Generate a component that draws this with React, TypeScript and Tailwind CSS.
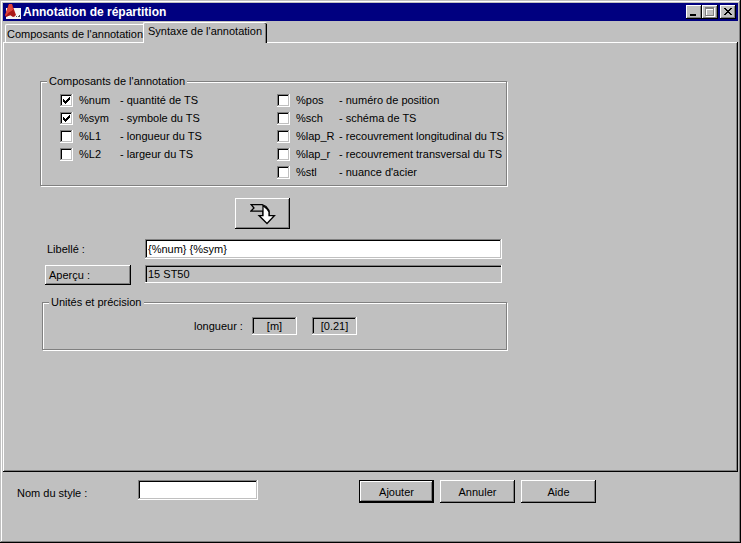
import { useState } from 'react';
import type { ReactNode } from 'react';
import clsx from 'clsx';

const raised =
  'bg-[#c0c0c0] shadow-[inset_-1px_-1px_0_#000,inset_1px_1px_0_#fff,inset_-2px_-2px_0_#808080]';
const sunken =
  'shadow-[inset_-1px_-1px_0_#fff,inset_1px_1px_0_#808080,inset_-2px_-2px_0_#c0c0c0,inset_2px_2px_0_#000]';

const leftTokens = [
  { token: '%num', text: 'quantité de TS', checked: true },
  { token: '%sym', text: 'symbole du TS', checked: true },
  { token: '%L1', text: 'longueur du TS' },
  { token: '%L2', text: 'largeur du TS' },
];

const rightTokens = [
  { token: '%pos', text: 'numéro de position' },
  { token: '%sch', text: 'schéma de TS' },
  { token: '%lap_R', text: 'recouvrement longitudinal du TS' },
  { token: '%lap_r', text: 'recouvrement transversal du TS' },
  { token: '%stl', text: "nuance d'acier" },
];

type Token = { token: string; text: string; checked?: boolean };

function TokenRow({ token, text, checked = false, wide }: Token & { wide?: boolean }) {
  return (
    <label className="flex h-[18px] items-center">
      <span className="mr-1.5 grid size-[13px] shrink-0">
        <input
          type="checkbox"
          defaultChecked={checked}
          className={clsx('peer col-start-1 row-start-1 size-[13px] appearance-none bg-white', sunken)}
        />
        <svg
          viewBox="0 0 13 13"
          shapeRendering="crispEdges"
          className="pointer-events-none invisible col-start-1 row-start-1 size-[13px] peer-checked:visible"
        >
          <path d="M3 5h1v1h1v1h1v-1h1v-1h1v-1h1v-1h1v3h-1v1h-1v1h-1v1h-1v1h-1v-1h-1v-1h-1z" />
        </svg>
      </span>
      <span className={clsx('shrink-0', wide ? 'w-[43px]' : 'w-[41px]')}>{token}</span>
      <span className="whitespace-nowrap">- {text}</span>
    </label>
  );
}

function GroupBox({ title, className, children }: { title: string; className?: string; children: ReactNode }) {
  return (
    <fieldset
      className={clsx(
        'border border-[#808080] shadow-[1px_1px_0_#fff,inset_1px_1px_0_#fff]',
        className,
      )}
    >
      <legend className="ml-1.5 bg-[#c0c0c0] px-0.5">{title}</legend>
      {children}
    </fieldset>
  );
}

function AppIcon() {
  return (
    <svg viewBox="0 0 16 16" className="size-4 shrink-0">
      <rect x="1" y="4" width="15" height="11" fill="#f4f4f4" />
      <path d="M4 0h3l4 11-2 2-3-2-3 1-2 1-1-2z" fill="#b81c1c" />
      <path d="M4 0h3l1 6-3 3-5 3z" fill="#e0443c" />
      <path d="M3 9l5-3 2 5-2 2-3-2-4 2z" fill="#a81818" />
      <path d="M11 12h1v1h-1zM14 11h1v2h-2v-1h1z" fill="#555" />
    </svg>
  );
}

function TitleBar() {
  const button = clsx('flex h-3.5 w-4 items-center justify-center', raised);
  return (
    <header className="flex h-[18px] items-center bg-[#000080] pr-0.5 pl-0.5 text-white">
      <AppIcon />
      <h1 className="ml-0.5 flex-1 text-[12px] font-bold">Annotation de répartition</h1>
      <button type="button" aria-label="Réduire" className={button}>
        <svg viewBox="0 0 16 14" shapeRendering="crispEdges" className="h-3.5 w-4">
          <path d="M4 9h6v2H4z" />
        </svg>
      </button>
      <button type="button" aria-label="Agrandir" disabled className={button}>
        <svg viewBox="0 0 16 14" shapeRendering="crispEdges" className="h-3.5 w-4">
          <path d="M4 3h9v9H4zM5 5v6h7V5z" fill="#fff" fillRule="evenodd" />
          <path d="M3 2h9v9H3zM4 4v6h7V4z" fill="#808080" fillRule="evenodd" />
        </svg>
      </button>
      <button type="button" aria-label="Fermer" className={clsx('ml-0.5', button)}>
        <svg viewBox="0 0 16 14" shapeRendering="crispEdges" className="h-3.5 w-4">
          <path d="M4 3h2v1h1v1h2V4h1V3h2v1h-1v1h-1v1H9v1h1v1h1v1h1v1h-2V9H9V8H7v1H6v1H4V9h1V8h1V7h1V6H6V5H5V4H4z" />
        </svg>
      </button>
    </header>
  );
}

function DialogButton({ children, primary }: { children: ReactNode; primary?: boolean }) {
  return (
    <button
      type="button"
      className={clsx('h-[23px] w-[75px]', primary && 'border border-black', raised)}
    >
      {children}
    </button>
  );
}

export default function App() {
  const [label, setLabel] = useState('{%num} {%sym}');

  return (
    <main className="flex min-h-screen flex-col bg-[#c0c0c0] p-[3px] font-['Liberation_Sans',Arial,sans-serif] text-[11px] leading-[14px] text-black shadow-[inset_-1px_-1px_0_#000,inset_1px_1px_0_#c0c0c0,inset_-2px_-2px_0_#808080,inset_2px_2px_0_#fff]">
      <TitleBar />

      <div role="tablist" className="mt-px flex items-end pl-0.5">
        <button
          type="button"
          role="tab"
          aria-selected="false"
          className="h-[18px] w-[138px] rounded-tl-[2px] border-t border-l border-white pl-px text-left whitespace-nowrap"
        >
          Composants de l'annotation
        </button>
        <button
          type="button"
          role="tab"
          aria-selected="true"
          className="z-10 -mb-px h-[21px] w-[124px] rounded-t-[2px] border-t border-l border-white bg-[#c0c0c0] pb-1 pl-1 text-left whitespace-nowrap shadow-[inset_-1px_0_0_#000,inset_-2px_0_0_#808080]"
        >
          Syntaxe de l'annotation
        </button>
      </div>

      <section
        role="tabpanel"
        className="flex-1 pt-8 pb-5 pl-[37px] shadow-[inset_-1px_-1px_0_#000,inset_1px_1px_0_#fff,inset_-2px_-2px_0_#808080]"
      >
        <div className="max-w-[467px]">
          <GroupBox title="Composants de l'annotation">
            <div className="grid grid-cols-[217px_1fr] pt-[3px] pb-1 pl-[19px]">
              <div>
                {leftTokens.map((item) => (
                  <TokenRow key={item.token} {...item} />
                ))}
              </div>
              <div>
                {rightTokens.map((item) => (
                  <TokenRow key={item.token} {...item} wide />
                ))}
              </div>
            </div>
          </GroupBox>

          <button
            type="button"
            aria-label="Insérer"
            className={clsx('mt-3 ml-[195px] flex h-[31px] w-[55px] items-center justify-center', raised)}
          >
            <svg viewBox="0 0 26 22" className="h-[22px] w-[26px]">
              <path
                d="M1 1.500h11l4 2 3 4v5H13V8H1l3-3z"
                fill="#c0c0c0"
                stroke="#000"
                strokeWidth="1.250"
              />
              <path
                d="M13 2.500 17 6l2 3v3.500h5.500L17 20.500 9 12.500h4z"
                fill="#fff"
                stroke="#000"
                strokeWidth="1.250"
              />
            </svg>
          </button>

          <div className="mt-2.5 grid grid-cols-[100px_1fr] items-start gap-y-1.5 pr-[5px] pl-[5px]">
            <label htmlFor="libelle" className="pt-[3px] pl-0.5">
              Libellé :
            </label>
            <input
              id="libelle"
              type="text"
              value={label}
              onChange={(e) => setLabel(e.target.value)}
              className={clsx('h-5 w-full bg-white px-[3px]', sunken)}
            />
            <button type="button" className={clsx('h-5 w-[86px] pl-1 text-left', raised)}>
              Aperçu :
            </button>
            <output
              className="h-[18px] px-[3px] pt-0.5 shadow-[inset_-1px_-1px_0_#fff,inset_1px_1px_0_#808080,inset_2px_2px_0_#000]"
            >
              15 ST50
            </output>
          </div>

          <GroupBox title="Unités et précision" className="mt-2.5 ml-0.5">
            <div className="flex items-center pt-2 pb-3.5 pl-[151px]">
              <span className="w-[58px]">longueur :</span>
              <button type="button" className={clsx('h-[18px] w-[45px]', sunken)}>
                [m]
              </button>
              <button type="button" className={clsx('ml-[15px] h-[18px] w-[45px]', sunken)}>
                [0.21]
              </button>
            </div>
          </GroupBox>
        </div>
      </section>

      <footer className="flex h-[68px] items-start pt-2 pl-3.5">
        <label htmlFor="style" className="w-[121px] pt-1.5">
          Nom du style :
        </label>
        <input id="style" type="text" className={clsx('h-5 w-[120px] bg-white px-[3px]', sunken)} />
        <div className="ml-[101px] flex gap-1.5">
          <DialogButton primary>Ajouter</DialogButton>
          <DialogButton>Annuler</DialogButton>
          <DialogButton>Aide</DialogButton>
        </div>
      </footer>
    </main>
  );
}
